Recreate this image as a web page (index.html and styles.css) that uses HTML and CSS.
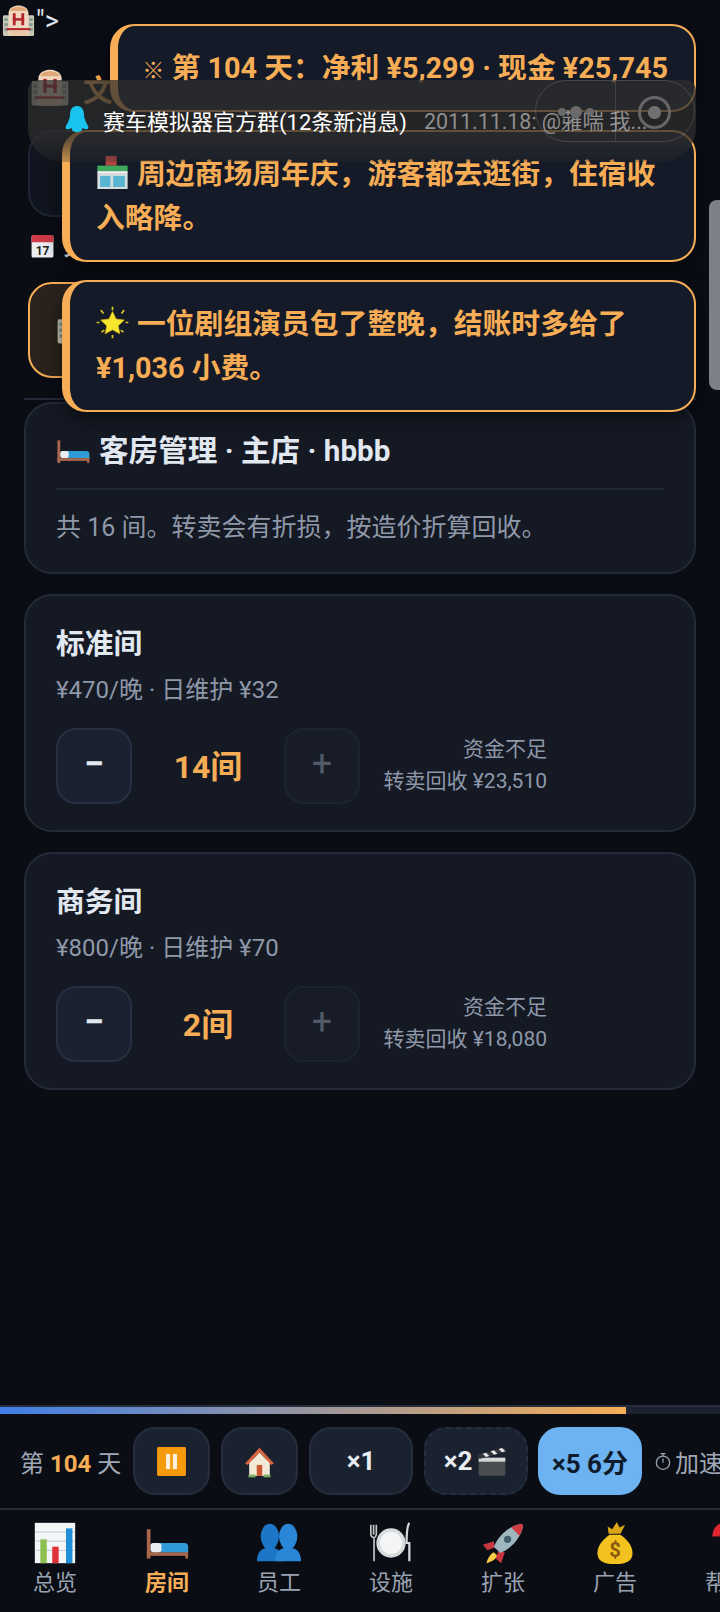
FILE: index.html
```html
<!DOCTYPE html>
<html lang="zh-CN">
<head>
    <meta charset="UTF-8">
    <meta name="viewport" content="width=device-width, initial-scale=1.0">
    <title>酒店模拟器</title>
    <link rel="stylesheet" href="styles.css">
</head>
<body>
    <svg class="icon-defs" aria-hidden="true">
        <symbol id="i-hotel" viewBox="0 0 48 48">
            <rect x="2" y="16" width="44" height="29" rx="2" fill="#c9c6b4"/>
            <path d="M10 45V13C10 5 18 2 24 2s14 3 14 11v32z" fill="#f0d8c0"/>
            <path d="M12 10C14 5 20 4 24 4s10 1 12 6z" fill="#e0a878"/>
            <rect x="4" y="20" width="5" height="4" fill="#7f9a94"/><rect x="4" y="27" width="5" height="4" fill="#7f9a94"/><rect x="4" y="34" width="5" height="4" fill="#7f9a94"/>
            <rect x="39" y="20" width="5" height="4" fill="#7f9a94"/><rect x="39" y="27" width="5" height="4" fill="#7f9a94"/><rect x="39" y="34" width="5" height="4" fill="#7f9a94"/>
            <rect x="16" y="13" width="4" height="17" fill="#b3262c"/><rect x="28" y="13" width="4" height="17" fill="#b3262c"/><rect x="16" y="20" width="16" height="3.5" fill="#b3262c"/>
            <rect x="7" y="34" width="34" height="3" fill="#b3262c"/>
            <rect x="12" y="38" width="24" height="7" fill="#e8c8a8"/>
        </symbol>
        <symbol id="i-calendar" viewBox="0 0 48 48">
            <rect x="3" y="3" width="42" height="43" rx="3" fill="#eceef2"/>
            <path d="M3 17V6a3 3 0 0 1 3-3h36a3 3 0 0 1 3 3v11z" fill="#cf3b46"/>
            <text x="24" y="41" text-anchor="middle" class="cal-num">17</text>
        </symbol>
        <symbol id="i-store" viewBox="0 0 48 48">
            <rect x="14" y="0" width="16" height="14" fill="#b5453f"/>
            <rect x="2" y="14" width="44" height="8" fill="#3fa85b"/>
            <rect x="2" y="22" width="44" height="4" fill="#f2f2ee"/>
            <rect x="2" y="26" width="44" height="22" fill="#d5dde0"/>
            <rect x="6" y="29" width="15" height="16" fill="#58b4d1"/>
            <rect x="25" y="29" width="17" height="16" fill="#58b4d1"/>
        </symbol>
        <symbol id="i-star" viewBox="0 0 48 48">
            <path d="M24 8l5.2 11 12 1.5-8.8 8.2 2.3 11.8L24 34.700l-10.700 5.800 2.300-11.800-8.800-8.200 12-1.500z" fill="#f6e72e" stroke="#e0b818"/>
            <path d="M24 1v5M24 42v5M7 6l4 5M41 6l-4 5M1 24h4M47 24h-4M8 38l4-3M40 38l-4-3" stroke="#d9c62a" stroke-width="2.500" fill="none"/>
        </symbol>
        <symbol id="i-bed" viewBox="0 0 48 48">
            <rect x="2" y="9" width="4" height="32" fill="#a8674a"/>
            <rect x="44" y="27" width="3" height="14" fill="#a8674a"/>
            <rect x="2" y="34" width="45" height="4" fill="#a8674a"/>
            <path d="M14 24h29a4 4 0 0 1 4 4v6H14z" fill="#2f9bd8"/>
            <rect x="6" y="24" width="12" height="10" rx="3" fill="#e8eef0"/>
        </symbol>
        <symbol id="i-pause" viewBox="0 0 48 48">
            <rect x="3" y="3" width="42" height="42" rx="2" fill="#f59a0c"/>
            <rect x="16" y="13" width="6" height="22" fill="#fdf1dd"/>
            <rect x="26" y="13" width="6" height="22" fill="#fdf1dd"/>
        </symbol>
        <symbol id="i-house" viewBox="0 0 48 48">
            <rect x="9" y="22" width="30" height="23" fill="#f2e9d8"/>
            <path d="M24 4L3 27l4 2L24 11l17 18 4-2z" fill="#d9653b"/>
            <path d="M24 11L9 27h30z" fill="#f2e9d8"/>
            <rect x="20" y="29" width="8" height="16" fill="#c9562f"/>
            <rect x="8" y="43" width="10" height="4" fill="#7fae62"/><rect x="30" y="43" width="10" height="4" fill="#7fae62"/>
        </symbol>
        <symbol id="i-clapper" viewBox="0 0 48 48">
            <rect x="4" y="19" width="40" height="27" rx="2" fill="#4a4d50"/>
            <rect x="4" y="19" width="40" height="6" fill="#d5d7d8"/>
            <path d="M3 15L43 3l2 7L5 21z" fill="#35383b"/>
            <path d="M10 13l5 5 5-1.500-5-5zM22 9.500l5 5 5-1.500-5-5zM34 6l5 5 5-1.500-5-5z" fill="#e8e8e8"/>
        </symbol>
        <symbol id="i-chart" viewBox="0 0 48 48">
            <rect x="2" y="2" width="44" height="44" fill="#f4f5f6"/>
            <path d="M2 12h44M2 22h44M2 32h44" stroke="#b9c3d0" stroke-width="1"/>
            <rect x="8" y="20" width="7" height="26" fill="#8cc152"/>
            <rect x="21" y="28" width="7" height="18" fill="#e0313a"/>
            <rect x="36" y="8" width="7" height="38" fill="#1f8fdc"/>
        </symbol>
        <symbol id="i-busts" viewBox="0 0 48 48">
            <ellipse cx="14" cy="17" rx="10" ry="14" fill="#1d77c9"/>
            <ellipse cx="34" cy="17" rx="10" ry="14" fill="#2a86d6"/>
            <path d="M0 44c0-11 6-15 14-15s14 4 14 15z" fill="#1d77c9"/>
            <path d="M20 44c0-11 6-15 14-15s14 4 14 15z" fill="#2a86d6"/>
        </symbol>
        <symbol id="i-plate" viewBox="0 0 48 48">
            <circle cx="24" cy="24" r="16" fill="#d8dadc"/>
            <circle cx="24" cy="24" r="12" fill="#f4f5f6"/>
            <path d="M2 4v11M5 4v11M8 4v11M2 14c0 3 2 4 3.500 4V44M8 14c0 3-2 4-2.500 4" stroke="#c4c7ca" stroke-width="1.800" fill="none"/>
            <path d="M44 2c-3 4-3 14-3 22h3v20" stroke="#d8dadc" stroke-width="2.400" fill="none"/>
        </symbol>
        <symbol id="i-rocket" viewBox="0 0 48 48">
            <path d="M14 34c-4 2-7 7-8 12 5-1 10-4 12-8z" fill="#f6c945"/>
            <path d="M14 22L2 26l5 6 8-3zM26 34l-4 12-6-5 3-8z" fill="#c9353d"/>
            <path d="M44 3C32 5 20 14 14 28l7 7c14-6 23-18 25-30z" fill="#9fb6bf"/>
            <path d="M44 3c-4 1-8 2-11 4l9 9c2-3 3-7 4-11z" fill="#d13c43"/>
            <circle cx="29" cy="20" r="4" fill="#41606e"/>
        </symbol>
        <symbol id="i-bag" viewBox="0 0 48 48">
            <path d="M18 15C8 22 4 30 5 37c1 7 8 10 19 10s18-3 19-10c1-7-3-15-13-22z" fill="#f3c21f"/>
            <path d="M17 14l-1-8 5 3 5-8 3 6 6-3-5 10z" fill="#d9a514"/>
            <text x="24" y="39" text-anchor="middle" class="bag-sign">$</text>
        </symbol>
        <symbol id="i-help" viewBox="0 0 48 48">
            <path d="M12 17C12 9 18 5 24 5s12 4 12 11c0 9-12 9-12 19" stroke="#e0252f" stroke-width="8" fill="none"/>
            <circle cx="24" cy="43" r="4.500" fill="#e0252f"/>
        </symbol>
        <symbol id="i-penguin" viewBox="0 0 26 28">
            <path d="M13 1C8 1 6 5 6 10c0 4-2 7-4 11-1 2 0 4 3 3l3-1c-1 2 1 4 5 4s6-2 5-4l3 1c3 1 4-1 3-3-2-4-4-7-4-11 0-5-2-9-7-9z" fill="#19c5ee"/>
        </symbol>
        <symbol id="i-timer" viewBox="0 0 24 24">
            <circle cx="12" cy="14" r="8" stroke="#9aa3b2" stroke-width="1.500" fill="none"/>
            <path d="M9 3h6M12 3v3M12 14V9" stroke="#9aa3b2" stroke-width="1.500" fill="none"/>
        </symbol>
    </svg>

    <div class="app">
        <main class="content">
            <div class="stray"><svg class="emoji-hotel-sm"><use href="#i-hotel"/></svg><span>"&gt;</span></div>
            <header class="app-head">
                <svg class="emoji-hotel"><use href="#i-hotel"/></svg>
                <span class="app-title">文</span>
            </header>
            <div class="hotel-card"></div>
            <div class="date-row"><svg class="emoji-cal"><use href="#i-calendar"/></svg><span>第 104 天</span></div>
            <div class="branch-card">
                <svg class="emoji-hotel"><use href="#i-hotel"/></svg>
            </div>
            <div class="divider"></div>

            <section class="card">
                <h2 class="card-title"><svg class="emoji-bed"><use href="#i-bed"/></svg>客房管理 · 主店 · hbbb</h2>
                <p class="card-desc">共 16 间。转卖会有折损，按造价折算回收。</p>
            </section>

            <section class="card room">
                <h3 class="room-name">标准间</h3>
                <p class="room-meta">¥470/晚 · 日维护 ¥32</p>
                <div class="stepper">
                    <button class="step">−</button>
                    <span class="count">14间</span>
                    <button class="step off">+</button>
                    <div class="note">资金不足<br>转卖回收 ¥23,510</div>
                </div>
            </section>

            <section class="card room">
                <h3 class="room-name">商务间</h3>
                <p class="room-meta">¥800/晚 · 日维护 ¥70</p>
                <div class="stepper">
                    <button class="step">−</button>
                    <span class="count">2间</span>
                    <button class="step off">+</button>
                    <div class="note">资金不足<br>转卖回收 ¥18,080</div>
                </div>
            </section>
        </main>

        <footer class="bottom">
            <div class="progress"><div class="progress-fill" style="width: 626px"></div></div>
            <div class="controls">
                <span class="day">第 <b>104</b> 天</span>
                <button class="ctl square"><svg class="ctl-icon"><use href="#i-pause"/></svg></button>
                <button class="ctl square"><svg class="ctl-icon"><use href="#i-house"/></svg></button>
                <button class="ctl wide">×1</button>
                <button class="ctl wide dashed">×2<svg class="ctl-clap"><use href="#i-clapper"/></svg></button>
                <button class="ctl wide on">×5 6分</button>
                <span class="tip"><svg class="tip-icon"><use href="#i-timer"/></svg>加速中</span>
            </div>
            <nav class="tabs">
                <a class="tab"><svg class="tab-icon"><use href="#i-chart"/></svg>总览</a>
                <a class="tab active"><svg class="tab-icon"><use href="#i-bed"/></svg>房间</a>
                <a class="tab"><svg class="tab-icon"><use href="#i-busts"/></svg>员工</a>
                <a class="tab"><svg class="tab-icon"><use href="#i-plate"/></svg>设施</a>
                <a class="tab"><svg class="tab-icon"><use href="#i-rocket"/></svg>扩张</a>
                <a class="tab"><svg class="tab-icon"><use href="#i-bag"/></svg>广告</a>
                <a class="tab"><svg class="tab-icon"><use href="#i-help"/></svg>帮助</a>
            </nav>
        </footer>

        <div class="toasts">
            <div class="toast"><span class="mark">※</span> 第 104 天：净利 ¥5,299 · 现金 ¥25,745</div>
            <div class="toast"><svg class="toast-icon"><use href="#i-store"/></svg>周边商场周年庆，游客都去逛街，住宿收入略降。</div>
            <div class="toast"><svg class="toast-icon"><use href="#i-star"/></svg>一位剧组演员包了整晚，结账时多给了 ¥1,036 小费。</div>
        </div>

        <div class="banner">
            <svg class="banner-icon"><use href="#i-penguin"/></svg>
            <span class="banner-title">赛车模拟器官方群(12条新消息)</span>
            <span class="banner-text">2011.11.18: @蕥喘 我...</span>
        </div>
        <div class="capsule">
            <div class="capsule-dots"><i></i><i class="big"></i><i></i></div>
            <div class="capsule-target"></div>
        </div>
        <div class="scroll-thumb"></div>
    </div>
</body>
</html>
```

FILE: styles.css
```css
* {
    box-sizing: border-box;
}
body {
    margin: 0;
    background-color: #0a0d14;
    font-family: Roboto, "Noto Sans CJK SC", sans-serif;
    color: #e2e8f0;
}
.icon-defs {
    display: none;
}
.cal-num {
    font: 700 23px Roboto, sans-serif;
    fill: #222;
}
.bag-sign {
    font: 700 22px Roboto, sans-serif;
    fill: #8a5a10;
}
.app {
    position: relative;
    display: flex;
    flex-direction: column;
    height: 100vh;
    overflow: hidden;
}
.content {
    flex: 1;
    padding: 0 24px;
    min-height: 0;
}

/* stuff mostly hidden under the toasts */
.stray {
    display: flex;
    align-items: center;
    height: 37px;
    margin-left: -23px;
    padding-top: 5px;
    font-size: 27px;
}
.emoji-hotel-sm {
    width: 35px;
    height: 34px;
}
.app-head {
    display: flex;
    align-items: center;
    gap: 13px;
    height: 36px;
    margin: 33px 0 0 6px;
}
.emoji-hotel {
    width: 40px;
    height: 40px;
}
.app-title {
    font-size: 30px;
    font-weight: 700;
    color: #f6ad55;
}
.hotel-card {
    height: 87px;
    margin: 24px 0 0 4px;
    background: #10151f;
    border: 2px solid #1f2633;
    border-radius: 24px;
}
.date-row {
    display: flex;
    align-items: flex-end;
    gap: 8px;
    height: 26px;
    margin: 16px 0 0 6px;
    font-size: 24px;
    font-weight: 700;
    line-height: 24px;
}
.emoji-cal {
    width: 25px;
    height: 26px;
}
.branch-card {
    height: 96px;
    margin: 23px 0 0 4px;
    padding: 22px 0 0 26px;
    background: #2a221d;
    border: 2px solid #f6ad55;
    border-radius: 24px;
}
.divider {
    height: 2px;
    margin-top: 20px;
    background: #232a38;
}

.card {
    margin-top: 2px;
    padding: 28px 30px 26px;
    background: #141924;
    border: 2px solid #232a38;
    border-radius: 28px;
}
.card-title {
    display: flex;
    align-items: center;
    gap: 9px;
    margin: 0;
    padding-bottom: 18px;
    border-bottom: 2px solid #202736;
    font-size: 29.6px;
    font-weight: 700;
    line-height: 38px;
}
.emoji-bed {
    width: 34px;
    height: 34px;
}
.card-desc {
    margin: 20px 0 0;
    font-size: 25px;
    line-height: 36px;
    color: #8f98a8;
}
.room {
    margin-top: 20px;
    padding-top: 29px;
    padding-bottom: 26px;
}
.room-name {
    margin: 0;
    font-size: 28.8px;
    font-weight: 700;
    line-height: 38px;
}
.room-meta {
    margin: 9px 0 0;
    font-size: 24px;
    line-height: 36px;
    color: #8f98a8;
}
.stepper {
    display: flex;
    align-items: center;
    margin-top: 20px;
}
.step {
    width: 76px;
    height: 76px;
    padding: 0 0 4px;
    background: #1a2230;
    border: 2px solid #263041;
    border-radius: 20px;
    font: 700 36px Roboto, sans-serif;
    color: #e2e8f0;
}
.step.off {
    background: #171c27;
    border-color: #1d2330;
    font-weight: 400;
    color: #525a68;
}
.count {
    width: 152px;
    margin-top: -4px;
    text-align: center;
    font-size: 32px;
    font-weight: 700;
    color: #f6ad55;
}
.note {
    width: 187px;
    margin-top: -3px;
    text-align: right;
    font-size: 21px;
    line-height: 32px;
    color: #8f98a8;
}

.bottom {
    flex: none;
}
.progress {
    height: 9px;
    background: #1c2230;
    border-top: 2px solid #262d3b;
}
.progress-fill {
    height: 100%;
    background: linear-gradient(90deg, #3f7fe8, #f6ad55);
}
.controls {
    display: flex;
    align-items: center;
    gap: 11px;
    height: 96px;
    padding-left: 20px;
    overflow: hidden;
    white-space: nowrap;
    border-bottom: 2px solid #232a38;
}
.day {
    flex: none;
    width: 102px;
    font-size: 24px;
    color: #a0a8b6;
}
.day b {
    color: #f6ad55;
}
.ctl {
    display: flex;
    flex: none;
    align-items: center;
    justify-content: center;
    height: 68px;
    padding: 0;
    background: #1a2230;
    border: 2px solid #262e3e;
    border-radius: 22px;
    font: 700 26px Roboto, "Noto Sans CJK SC", sans-serif;
    color: #e8edf4;
}
.square {
    width: 77px;
}
.wide {
    width: 104px;
}
.dashed {
    border-style: dashed;
    gap: 4px;
}
.on {
    margin-left: -1px;
    background: #6db3f2;
    border-color: #6db3f2;
    color: #0f1a2b;
}
.ctl-icon {
    width: 33px;
    height: 33px;
}
.ctl-clap {
    width: 32px;
    height: 32px;
}
.tip {
    display: flex;
    flex: none;
    align-items: center;
    gap: 2px;
    font-size: 24px;
    color: #a0a8b6;
}
.tip-icon {
    width: 20px;
    height: 22px;
}
.tabs {
    display: flex;
    gap: 2px;
    height: 102px;
    overflow: hidden;
}
.tab {
    display: flex;
    flex: none;
    flex-direction: column;
    align-items: center;
    width: 110px;
    padding-top: 11px;
    font-size: 22px;
    line-height: 30px;
    color: #9aa3b2;
}
.tab.active {
    font-weight: 700;
    color: #f6ad55;
}
.tab-icon {
    width: 44px;
    height: 44px;
    margin-bottom: 3px;
}

.toasts {
    position: absolute;
    top: 24px;
    right: 24px;
    display: flex;
    flex-direction: column;
    align-items: flex-end;
    gap: 18px;
}
.toast {
    max-width: 634px;
    padding: 20px 26px;
    background: #141a27;
    border: 2px solid #f6ad55;
    border-left-width: 8px;
    border-radius: 24px;
    box-shadow: 0 6px 20px rgba(0, 0, 0, 0.5);
    font-size: 28.8px;
    font-weight: 700;
    line-height: 44px;
    color: #f6ad55;
}
.toast:first-child {
    padding-left: 24px;
}
.mark {
    font-size: 22px;
    line-height: 1;
}
.toast-icon {
    width: 33px;
    height: 33px;
    margin-right: 8px;
    vertical-align: -5px;
}

.banner {
    position: absolute;
    top: 80px;
    left: 28px;
    right: 24px;
    display: flex;
    align-items: center;
    height: 82px;
    padding: 0 0 6px 36px;
    background: linear-gradient(rgba(46, 46, 46, 0.74) 72%, rgba(46, 46, 46, 0.25));
    border-radius: 10px 10px 34px 34px;
    white-space: nowrap;
}
.banner-icon {
    width: 26px;
    height: 28px;
    margin: 2px 13px 0 0;
}
.banner-title {
    margin-top: 3px;
    font-size: 22px;
    color: #fff;
}
.banner-text {
    margin: 3px 0 0 17px;
    font-size: 21.4px;
    color: #8f8f8f;
}
.capsule {
    position: absolute;
    top: 80px;
    left: 535px;
    display: flex;
    width: 160px;
    height: 62px;
    border: 1px solid rgba(255, 255, 255, 0.14);
    border-radius: 31px;
}
.capsule-dots {
    display: flex;
    align-items: center;
    justify-content: center;
    gap: 4px;
    width: 80px;
    padding-top: 2px;
    border-right: 1px solid rgba(255, 255, 255, 0.12);
}
.capsule-dots i {
    width: 8px;
    height: 8px;
    background: #6a6a6a;
    border-radius: 50%;
}
.capsule-dots i.big {
    width: 12px;
    height: 12px;
}
.capsule-target {
    width: 33px;
    height: 33px;
    margin: 15px 0 0 22px;
    border: 3px solid #666;
    border-radius: 50%;
    background: radial-gradient(circle, #707070 0 6px, transparent 7px);
}
.scroll-thumb {
    position: absolute;
    top: 200px;
    right: 0;
    width: 11px;
    height: 190px;
    background: #7c8188;
    border-radius: 8px 0 0 8px;
}
```
